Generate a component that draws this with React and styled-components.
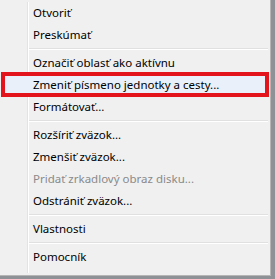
import React from "react";
import styled, { createGlobalStyle } from "styled-components";

const GlobalStyle = createGlobalStyle`
  html, body {
    margin: 0;
    padding: 0;
    background: #8e9196;
  }
`;

const Screen = styled.div`
  width: 275px;
  height: 279px;
  overflow: hidden;
  background: #8e9196;
`;

const Menu = styled.div`
  position: relative;
  width: 271px;
  height: 276px;
  box-sizing: border-box;
  padding: 2px 2px 3px 2px;
  background: #f0f0f0;
  border-right: 1px solid #b5b5b5;
  border-bottom: 1px solid #b5b5b5;
  font-family: "Noto Sans", "Open Sans", sans-serif;
  font-size: 11.5px;
  display: flex;
  flex-direction: column;
`;

const Gutter = styled.div`
  position: absolute;
  top: 2px;
  bottom: 2px;
  left: 27px;
  width: 1px;
  background: #e2e3e3;
  border-right: 1px solid #ffffff;
`;

const Item = styled.div`
  position: relative;
  height: 22px;
  flex-shrink: 0;
  display: flex;
  align-items: center;
  padding-left: 30px;
  color: ${(p) => (p.disabled ? "#8a8a8a" : "#000000")};
  box-sizing: border-box;
  border: 1px solid ${(p) => (p.active ? "#aecff7" : "transparent")};
  border-radius: 3px;
  background: ${(p) => (p.active ? "#e9f0fa" : "transparent")};
  white-space: nowrap;
`;

const Label = styled.span`
  position: relative;
  top: -1px;
`;

const Separator = styled.div`
  height: 6px;
  flex-shrink: 0;
  display: flex;
  flex-direction: column;
  justify-content: center;
  padding-left: 27px;

  &::before {
    content: "";
    display: block;
    height: 1px;
    background: #e0e0e0;
  }
  &::after {
    content: "";
    display: block;
    height: 1px;
    background: #ffffff;
  }
`;

const Marker = styled.div`
  position: absolute;
  left: -2px;
  right: -2px;
  top: -3px;
  bottom: -2px;
  border: 4px solid #e3141c;
  pointer-events: none;
`;

const entries = [
  { label: "Otvoriť" },
  { label: "Preskúmať" },
  { sep: true },
  { label: "Označiť oblasť ako aktívnu" },
  { label: "Zmeniť písmeno jednotky a cesty...", active: true },
  { label: "Formátovať..." },
  { sep: true },
  { label: "Rozšíriť zväzok..." },
  { label: "Zmenšiť zväzok..." },
  { label: "Pridať zrkadlový obraz disku...", disabled: true },
  { label: "Odstrániť zväzok..." },
  { sep: true },
  { label: "Vlastnosti" },
  { sep: true },
  { label: "Pomocník" },
];

export default function App() {
  return (
    <Screen>
      <GlobalStyle />
      <Menu>
        <Gutter />
        {entries.map((e, i) =>
          e.sep ? (
            <Separator key={i} />
          ) : (
            <Item key={i} active={e.active} disabled={e.disabled}>
              <Label>{e.label}</Label>
              {e.active && <Marker />}
            </Item>
          )
        )}
      </Menu>
    </Screen>
  );
}
